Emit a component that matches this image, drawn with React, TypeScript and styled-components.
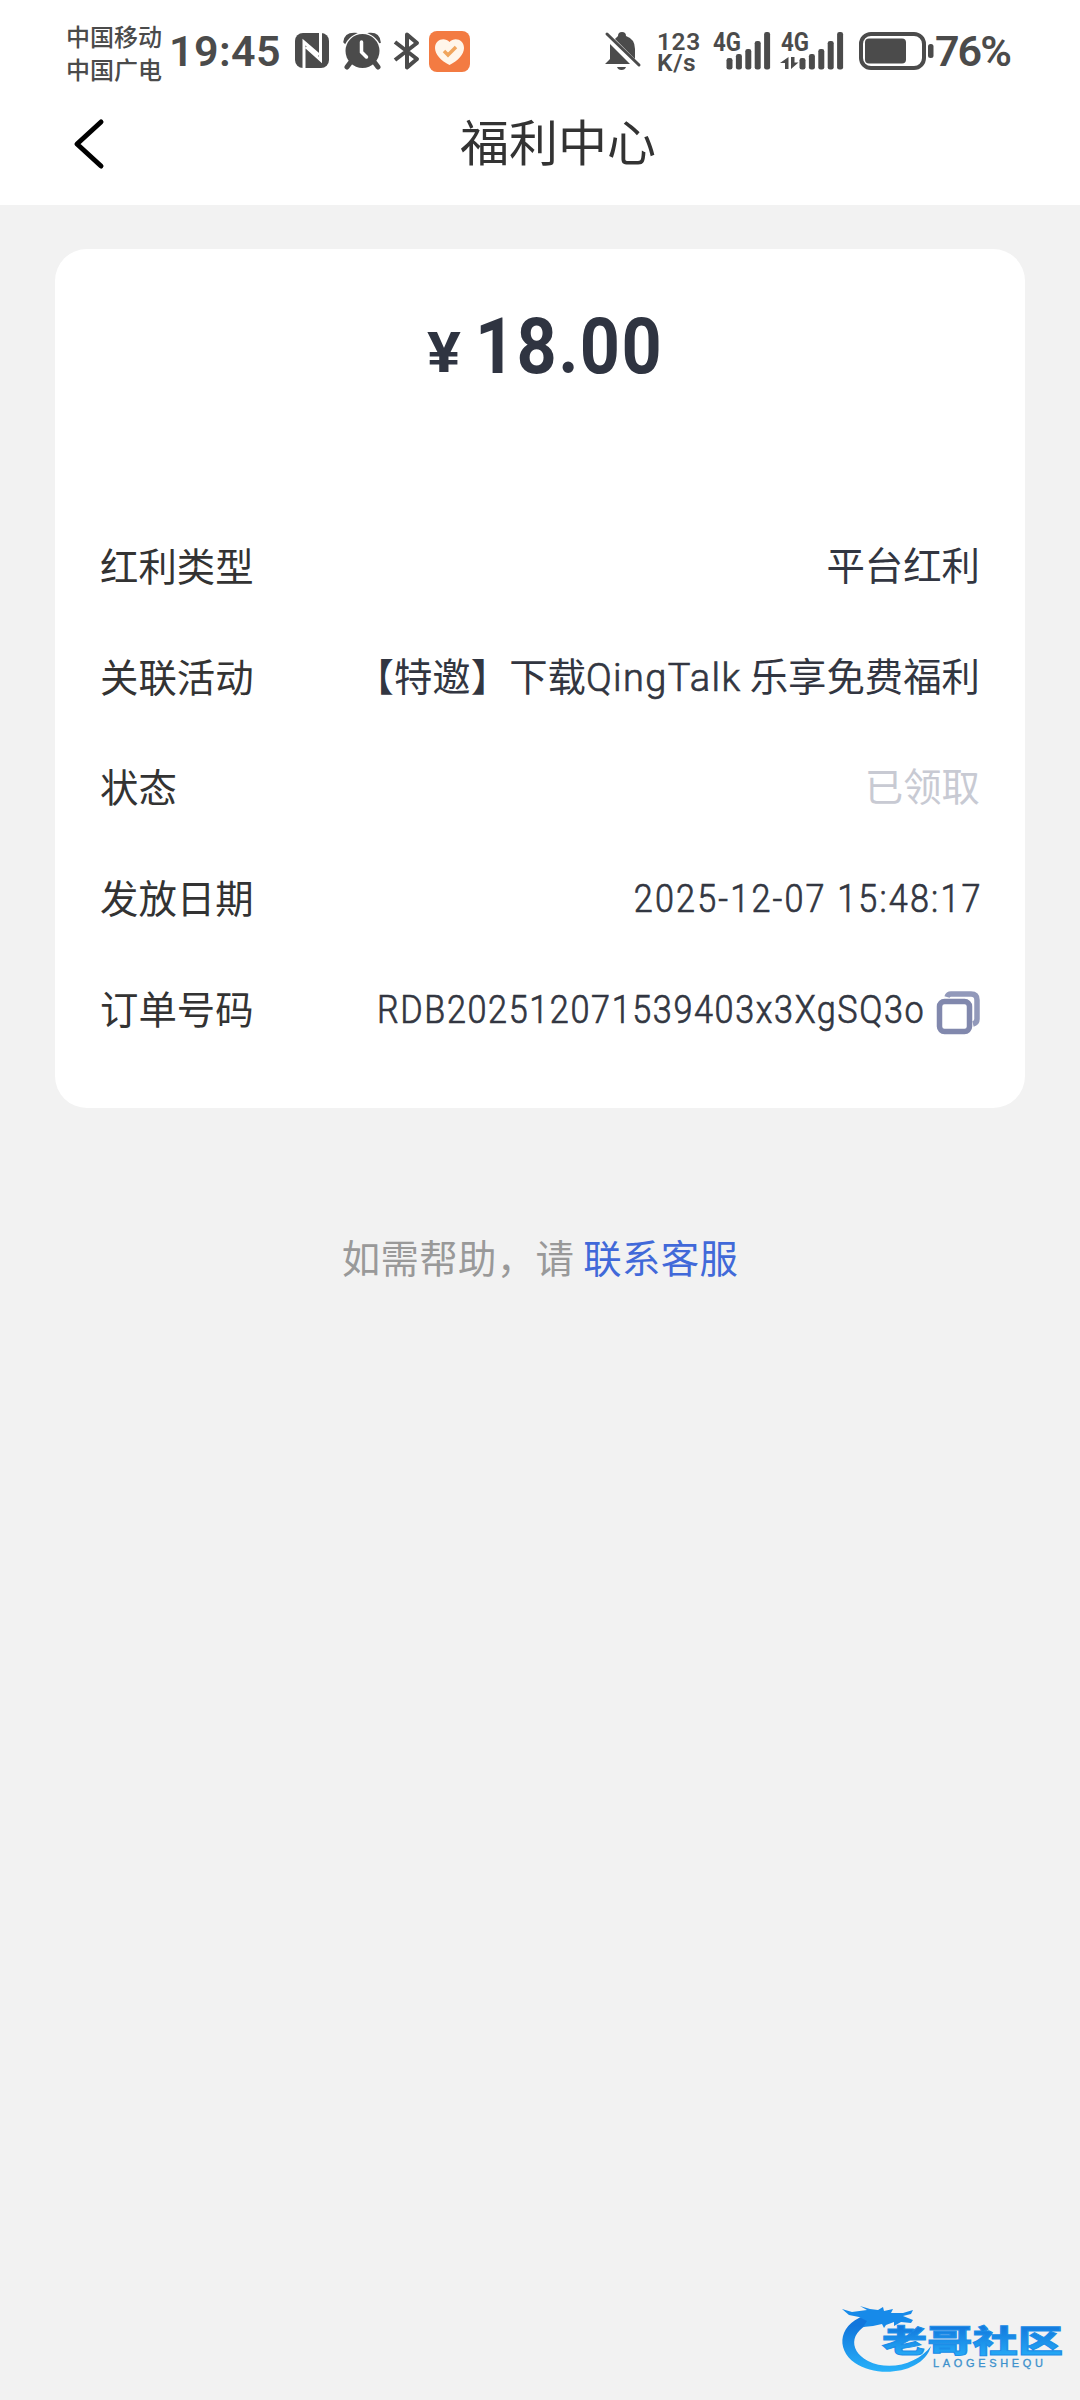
import React from "react";
import styled, { createGlobalStyle } from "styled-components";

const cjk = '"Noto Sans CJK SC", sans-serif';
const ink = "#4b4b4b";

const GlobalStyle = createGlobalStyle`
  body { margin: 0; background: #f2f2f2; }
  * { box-sizing: border-box; }
`;

const Page = styled.main`
  width: 1080px;
  height: 2400px;
  display: flex;
  flex-direction: column;
  background: #f2f2f2;
  font-family: Roboto, ${cjk};
  color: #333;
  white-space: nowrap;
  overflow: hidden;
`;

const StatusBar = styled.div`
  height: 102px;
  flex: none;
  display: flex;
  align-items: center;
  justify-content: space-between;
  padding: 0 64px 0 66px;
  background: #fff;
  color: ${ink};
`;

const StatusGroup = styled.div`
  display: flex;
  align-items: center;
`;

const Carriers = styled.div`
  width: 97px;
  margin-right: 6px;
  padding-top: 2px;
  font: 500 24px/33px ${cjk};
`;

const StatusText = styled.span<{ $width: number; $spacing: number }>`
  width: ${(p) => p.$width}px;
  font-size: 43px;
  line-height: 50px;
  font-weight: 600;
  letter-spacing: ${(p) => p.$spacing}px;
`;

const Glyph = styled.svg<{ $gap?: number }>`
  display: block;
  flex: none;
  overflow: visible;
  margin-left: ${(p) => p.$gap ?? 0}px;
`;

const NetSpeed = styled.div`
  width: 42px;
  margin-left: 16px;
  padding-top: 1px;
  font-size: 24.5px;
  line-height: 21px;
  font-weight: 600;
  letter-spacing: 0.6px;
`;

const NavBar = styled.header`
  height: 103px;
  flex: none;
  display: grid;
  grid-template-columns: 180px 1fr 144px;
  align-items: start;
  background: #fff;
`;

const BackButton = styled.button`
  border: 0;
  background: none;
  padding: 17px 0 0 72px;
  text-align: left;
`;

const Title = styled.h1`
  margin: 0;
  padding-top: 2px;
  text-align: center;
  font: 400 49px/72px ${cjk};
`;

const Card = styled.section`
  height: 859px;
  flex: none;
  margin: 44px 55px 0;
  padding: 58px 45px 0;
  border-radius: 32px;
  background: #fff;
`;

const Price = styled.div`
  height: 204px;
  display: flex;
  align-items: baseline;
  justify-content: center;
  color: #2f3441;
  font-weight: 700;
  line-height: 80px;
`;

const Currency = styled.span`
  width: 52px;
  font-size: 56px;
  transform: translate(4px, -1px) scaleX(1.13);
  transform-origin: left;
`;

const Amount = styled.span`
  width: 182px;
  font-size: 77px;
  letter-spacing: 1.5px;
  transform: scaleX(0.91);
  transform-origin: left;
`;

const Row = styled.div`
  height: 110.6px;
  display: flex;
  align-items: center;
  justify-content: space-between;
  font-size: 38.4px;
  line-height: 56px;
`;

const Label = styled.span`
  margin-bottom: 4px;
  font-family: ${cjk};
`;

const Value = styled.span<{ $muted?: boolean }>`
  display: flex;
  align-items: center;
  margin-top: 2px;
  white-space: pre;
  color: ${(p) => (p.$muted ? "#c8cad3" : "#323641")};
`;

const Latin = styled.span<{ $scale: number; $spacing: number }>`
  font-size: 38px;
  font-weight: 300;
  -webkit-text-stroke: 0.7px currentColor;
  letter-spacing: ${(p) => p.$spacing}px;
  margin-right: -${(p) => p.$spacing}px;
  transform: scaleX(${(p) => p.$scale});
  transform-origin: right;
`;

const CopyIcon = styled(Glyph)`
  margin-top: 5px;
`;

const Help = styled.p`
  margin: 120px 0 0;
  text-align: center;
  font: 400 38.4px/56px ${cjk};
  letter-spacing: 0.35px;
  color: #999;
`;

const HelpLink = styled.a`
  color: #4169d9;
`;

const Watermark = styled.svg`
  position: absolute;
  left: 820px;
  top: 2280px;
`;

const Signal = ({ data }: { data?: boolean }) => (
  <Glyph width={data ? 63 : 58} height="40" viewBox={data ? "-5 0 63 40" : "0 0 58 40"} $gap={data ? 9 : 14} fill={ink}>
    <text x={data ? -4 : 0} y="19.5" fontFamily="Roboto" fontSize="26" fontWeight="700" textLength="28" lengthAdjust="spacingAndGlyphs">4G</text>
    {[27, 23, 18, 10, 1].map((top, i) => (
      <rect key={top} x={13.5 + i * 9.4 + (data ? 1 : 0)} y={top} width="6" height={38.5 - top} rx="2.3" />
    ))}
    {data && <path d="M3.500 26v12H0v-6h-5zM6 26v12l7.500-6.500h-4V26z" />}
  </Glyph>
);

const rows = [
  { label: "红利类型", value: "平台红利" },
  { label: "关联活动", value: <>【特邀】下载<Latin $scale={1} $spacing={1.4}>QingTalk</Latin> 乐享免费福利</> },
  { label: "状态", value: "已领取", muted: true },
  { label: "发放日期", value: <Latin $scale={0.9} $spacing={2.4}>2025-12-07 15:48:17</Latin> },
  {
    label: "订单号码",
    value: (
      <>
        <Latin $scale={0.9} $spacing={1.8}>RDB202512071539403x3XgSQ3o</Latin>
        <CopyIcon width="43" height="43" viewBox="0 0 43 43" $gap={13} fill="none" stroke="#8188ad" strokeWidth="5.5">
          <path d="M10 6q1-3 4-3h20q6 0 6 6v19q0 4-4 5" stroke="#9299ba" />
          <rect x="2.500" y="10.500" width="30" height="30" rx="5" fill="#fff" />
        </CopyIcon>
      </>
    ),
  },
];

export default function App() {
  return (
    <Page>
      <GlobalStyle />
      <StatusBar>
        <StatusGroup>
          <Carriers>中国移动<br />中国广电</Carriers>
          <StatusText $width={112} $spacing={0.4}>19:45</StatusText>
          <Glyph width="35" height="36" viewBox="0 0 35 36" $gap={14}>
            <rect width="34" height="35" rx="8" fill={ink} />
            <path d="M9 36V9L24 22M25.500-1v28L11 14" fill="none" stroke="#fff" strokeWidth="3" />
          </Glyph>
          <Glyph width="39" height="38" viewBox="0 0 39 38" $gap={13} fill={ink}>
            <path d="M1 10Q2 1 12 1.500Q5 5 2 11zM37 10Q36 1 27 1.500Q34 5 37 11z" stroke={ink} strokeWidth="1.500" />
            <circle cx="19.500" cy="19" r="17" />
            <path d="M7 31l-3 4M32 31l3 4" stroke={ink} strokeWidth="5" strokeLinecap="round" />
            <path d="M18.500 10v10l5 5" fill="none" stroke="#fff" strokeWidth="3.500" strokeLinecap="round" />
          </Glyph>
          <Glyph width="26" height="38" viewBox="0 0 26 38" $gap={12} fill="none" stroke={ink} strokeWidth="4" strokeLinejoin="round">
            <path d="M1 10l22 17-10 8.500V2.500L23 11 1 28" />
          </Glyph>
          <Glyph width="41" height="41" viewBox="0 0 41 41" $gap={9}>
            <rect width="41" height="41" rx="8" fill="#f37b42" />
            <path d="M20.500 34C12 30 6 23 6 17C6 8 16 6 20.500 11C25 6 35 8 35 17c0 6-6 13-14.500 17z" fill="#fff6ea" />
            <path d="M15 20l4 4 8-8" fill="none" stroke="#f0a55c" strokeWidth="3.500" />
          </Glyph>
        </StatusGroup>
        <StatusGroup>
          <Glyph width="36" height="40" viewBox="0 0 36 40" fill={ink}>
            <path d="M0 33l5-5V13L25 33zM10 8q2-2 3-3 0-4 4-4t4 4q9 3 9 13v10zM12 36h9q-1 3-4.500 3T12 36z" />
            <path d="M2 3l32 31" stroke={ink} strokeWidth="3" strokeLinecap="round" />
          </Glyph>
          <NetSpeed>123<br />K/s</NetSpeed>
          <Signal />
          <Signal data />
          <Glyph width="76" height="38" viewBox="0 0 76 38" $gap={16}>
            <rect x="2" y="2" width="63" height="34" rx="10" fill="none" stroke={ink} strokeWidth="4" />
            <rect x="6" y="6.500" width="41" height="25" rx="4" fill={ink} />
            <rect x="69" y="12" width="5.500" height="14" rx="2.500" fill={ink} />
          </Glyph>
          <StatusText $width={81} $spacing={-2}>76%</StatusText>
        </StatusGroup>
      </StatusBar>
      <NavBar>
        <BackButton aria-label="返回">
          <Glyph width="34" height="50" viewBox="0 0 34 50" fill="none" stroke="#000" strokeWidth="5" strokeLinecap="round" strokeLinejoin="round">
            <path d="M29 3L5 25l24 22" />
          </Glyph>
        </BackButton>
        <Title>福利中心</Title>
      </NavBar>
      <Card>
        <Price><Currency>¥</Currency><Amount>18.00</Amount></Price>
        {rows.map((r) => (
          <Row key={r.label}>
            <Label>{r.label}</Label>
            <Value $muted={r.muted}>{r.value}</Value>
          </Row>
        ))}
      </Card>
      <Help>如需帮助，请 <HelpLink>联系客服</HelpLink></Help>
      <Watermark width="260" height="120" viewBox="0 0 260 120">
        <defs>
          <linearGradient id="blue" x1="0" y1="0" x2="0" y2="1">
            <stop offset="0.2" stopColor="#1276dc" />
            <stop offset="1" stopColor="#28b2fa" />
          </linearGradient>
        </defs>
        <path d="M50 34C18 42 15 69 35 83C58 99 104 93 111 66C99 83 70 92 48 81C27 70 29 47 61 40z" fill="url(#blue)" />
        <path d="M22 29l10 3 15-2-7-4 10 3 8 1 5-3 1 4 9-2-2 4 12 0 10-3-2 4-8 2 10 4-2 3-10-1-7 4 0-4-8 3-2 3-2-4-9 2-10 1 4-6-8-4-10-2z" fill="#178ae9" />
        <text transform="translate(62 72) scale(1 .68)" fontFamily="Noto Sans CJK SC, sans-serif" fontSize="45" fontWeight="900" fill="url(#blue)" stroke="#1c8ee8" strokeWidth="1.4" textLength="181">老哥社区</text>
        <text x="113" y="86.500" fontFamily="Liberation Sans, sans-serif" fontSize="11" fill="#3c91cc" stroke="#3c91cc" strokeWidth="0.3" textLength="110">LAOGESHEQU</text>
      </Watermark>
    </Page>
  );
}
